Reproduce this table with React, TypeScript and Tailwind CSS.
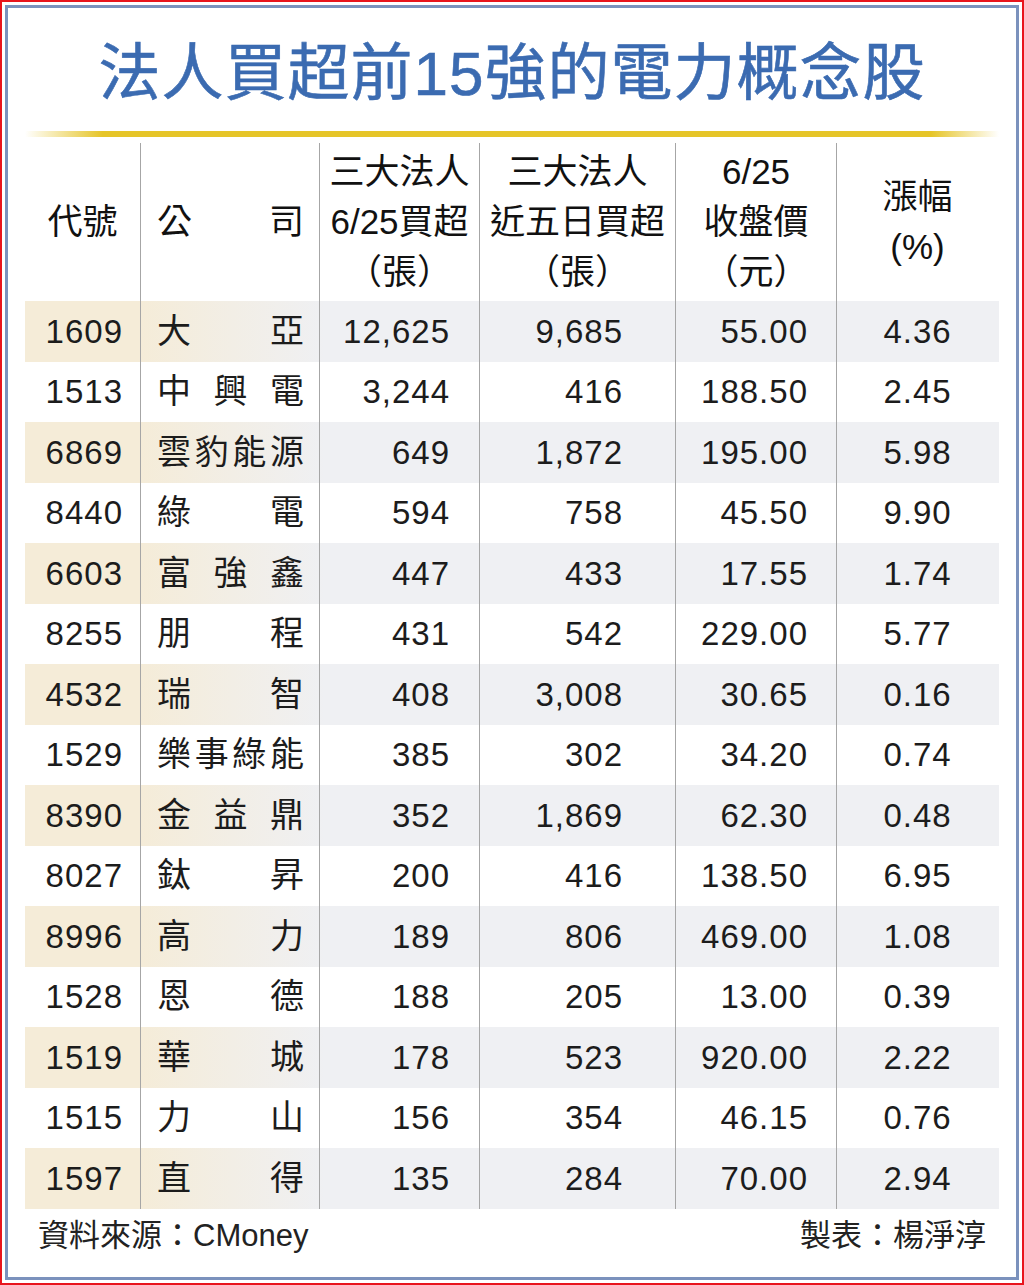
const rows: string[][] = [
  ['1609', '大亞', '12,625', '9,685', '55.00', '4.36'],
  ['1513', '中興電', '3,244', '416', '188.50', '2.45'],
  ['6869', '雲豹能源', '649', '1,872', '195.00', '5.98'],
  ['8440', '綠電', '594', '758', '45.50', '9.90'],
  ['6603', '富強鑫', '447', '433', '17.55', '1.74'],
  ['8255', '朋程', '431', '542', '229.00', '5.77'],
  ['4532', '瑞智', '408', '3,008', '30.65', '0.16'],
  ['1529', '樂事綠能', '385', '302', '34.20', '0.74'],
  ['8390', '金益鼎', '352', '1,869', '62.30', '0.48'],
  ['8027', '鈦昇', '200', '416', '138.50', '6.95'],
  ['8996', '高力', '189', '806', '469.00', '1.08'],
  ['1528', '恩德', '188', '205', '13.00', '0.39'],
  ['1519', '華城', '178', '523', '920.00', '2.22'],
  ['1515', '力山', '156', '354', '46.15', '0.76'],
  ['1597', '直得', '135', '284', '70.00', '2.94'],
]

const cols = 'grid grid-cols-[115px_179px_160px_196px_161px_162px]'
const line = 'border-l border-[#a6a6a6]'

// full-width bracketed unit, e.g. （張）, one em box per glyph
function Unit({ c }: { c: string }) {
  return (
    <span className="flex">
      <span className="w-[35px] text-center">（</span>
      <span className="w-[35px] text-center">{c}</span>
      <span className="w-[35px] text-center">）</span>
    </span>
  )
}

export default function App() {
  return (
    <div className="w-[1024px] h-[1285px] border-2 border-[#e8141c] bg-white p-[3px] font-['Liberation_Sans','Noto_Sans_CJK_TC',sans-serif] text-[#1c1c1c]">
      <div className="h-full border-[3px] border-[#7b92bd] flex flex-col">
        {/* Title */}
        <div className="h-[123px] flex items-center justify-center pt-[8px]">
          <h1 className="text-[62px] leading-none font-normal text-[#3b6bb1] tracking-[1px] [-webkit-text-stroke:0.6px_#3b6bb1]">
            法人買超前15強的電力概念股
          </h1>
        </div>
        <div className="mx-[17px] h-[6px] bg-[linear-gradient(to_right,rgba(230,197,40,0)_0%,#e6c528_8%,#e6c528_93%,rgba(230,197,40,0)_100%)]" />

        {/* Table */}
        <div className="mx-[17px] mt-[6px]">
          <div className={`${cols} h-[158px] text-[35px] leading-[50px] text-[#111]`}>
            <div className="flex items-center justify-center">代號</div>
            <div className={`${line} flex items-center justify-between pl-[16px] pr-[15px]`}>
              <span>公</span>
              <span>司</span>
            </div>
            <div className={`${line} flex flex-col items-center justify-center`}>
              <span>三大法人</span>
              <span>6/25買超</span>
              <Unit c="張" />
            </div>
            <div className={`${line} flex flex-col items-center justify-center`}>
              <span>三大法人</span>
              <span>近五日買超</span>
              <Unit c="張" />
            </div>
            <div className={`${line} flex flex-col items-center justify-center`}>
              <span>6/25</span>
              <span>收盤價</span>
              <Unit c="元" />
            </div>
            <div className={`${line} flex flex-col items-center justify-center`}>
              <span>漲幅</span>
              <span>(%)</span>
            </div>
          </div>

          {rows.map((r, i) => (
            <div
              key={r[0]}
              className={`${cols} h-[60.5px] text-[33px] tracking-[1px] ${
                i % 2 === 0
                  ? 'bg-[linear-gradient(to_right,#f5ecd8_0px,#f5ecd8_115px,#eff0f3_300px,#eff0f3_100%)]'
                  : 'bg-white'
              }`}
            >
              <div className="flex items-center justify-end pr-[17px]">{r[0]}</div>
              <div className={`${line} flex items-center justify-between pl-[16px] pr-[15px] text-[34px] tracking-normal`}>
                {r[1].split('').map((c, j) => (
                  <span key={j}>{c}</span>
                ))}
              </div>
              <div className={`${line} flex items-center justify-end pr-[29px]`}>{r[2]}</div>
              <div className={`${line} flex items-center justify-end pr-[52px]`}>{r[3]}</div>
              <div className={`${line} flex items-center justify-end pr-[28px]`}>{r[4]}</div>
              <div className={`${line} flex items-center justify-center`}>{r[5]}</div>
            </div>
          ))}
        </div>

        {/* Footer */}
        <div className="flex justify-between pt-[8px] pl-[30px] pr-[30px] text-[31px] leading-[38px] text-[#222]">
          <span>資料來源：CMoney</span>
          <span>製表：楊淨淳</span>
        </div>
      </div>
    </div>
  )
}
